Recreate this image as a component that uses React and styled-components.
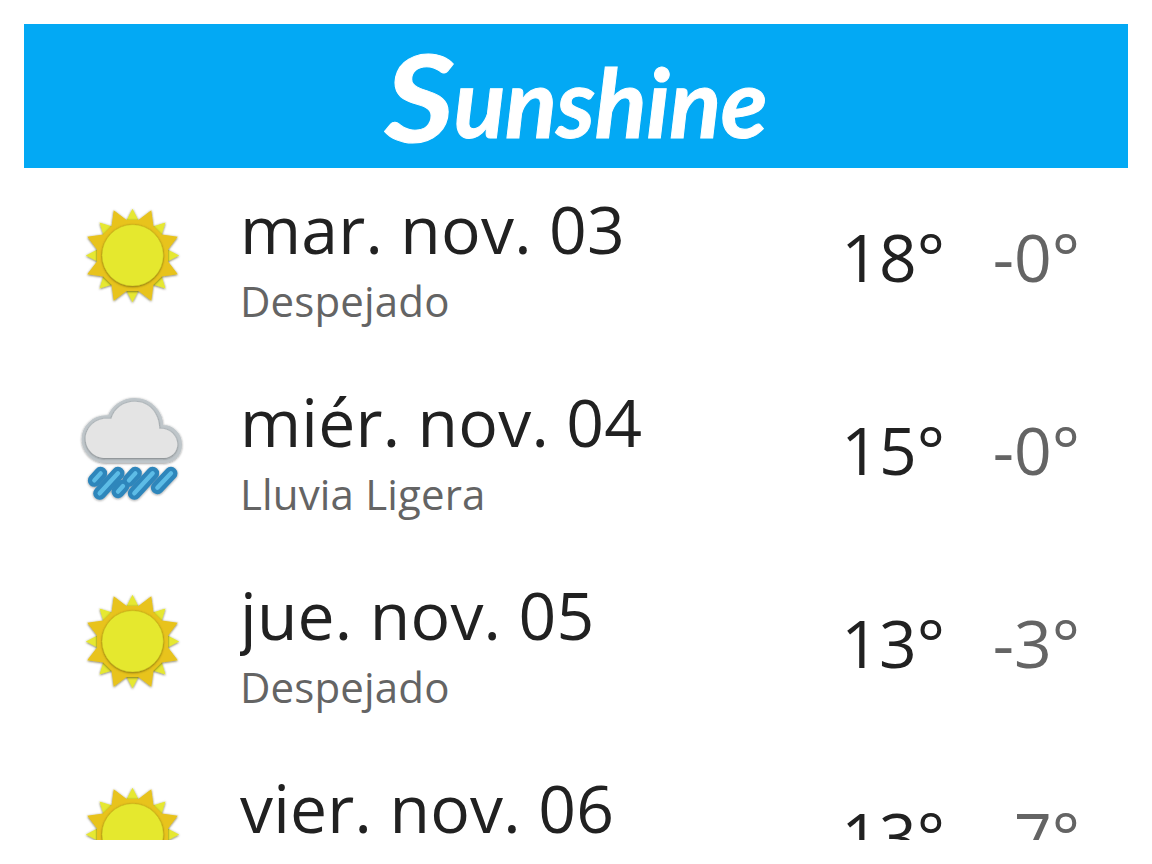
import React from 'react';
import styled, { createGlobalStyle } from 'styled-components';

const Global = createGlobalStyle`
  * { box-sizing: border-box; }
  body { margin: 0; background: #fff; }
`;

const Page = styled.div`
  height: 864px;
  padding: 24px;
  font-family: 'Open Sans', 'Noto Sans', sans-serif;
`;

const Screen = styled.main`
  display: flex;
  flex-direction: column;
  height: 816px;
  overflow: hidden;
`;

const Header = styled.header`
  flex: none;
  display: flex;
  justify-content: center;
  height: 144px;
  background: #03a9f4;
`;

const Brand = styled.h1`
  display: flex;
  align-items: baseline;
  margin: 0;
  padding: 8px 0 0 7px;
  color: #fff;
  font: italic 700 96px/120px Lato, sans-serif;
  letter-spacing: -0.5px;
  white-space: nowrap;
  -webkit-text-stroke: 1px #fff;
`;

const Initial = styled.span`
  font-size: 120px;
  line-height: 120px;
  transform: translateY(4px) scaleX(1.12);
  transform-origin: right;
`;

const List = styled.ul`
  flex: none;
  margin: 0;
  padding: 0;
  list-style: none;
`;

const Row = styled.li`
  display: grid;
  grid-template-columns: 216px 1fr 134px 135px;
  height: 193px;
  padding-right: 48px;
`;

const IconCell = styled.div`
  padding: 28px 0 0 48px;
  svg { display: block; }
`;

const Info = styled.div`
  display: flex;
  flex-direction: column;
  overflow: hidden;
`;

const DayName = styled.div`
  height: 103px;
  color: #212121;
  font-size: 66px;
  line-height: 120px;
  letter-spacing: 0.22px;
  white-space: nowrap;
`;

const Summary = styled.div`
  color: #646464;
  font-size: 42px;
  line-height: 60px;
  letter-spacing: 0.15px;
`;

const Temp = styled.div`
  color: ${(p) => (p.$low ? '#646464' : '#212121')};
  font-size: 66px;
  line-height: 176px;
  text-align: right;
  white-space: nowrap;
`;

const point = (r, deg) => {
  const a = (deg * Math.PI) / 180;
  return `${(181.5 + r * Math.sin(a)).toFixed(1)},${(178.5 - r * Math.cos(a)).toFixed(1)}`;
};
const steps = [0, 45, 90, 135, 180, 225, 270, 315];
const rays = steps
  .flatMap((a) => [point(108, a - 9.5), point(108, a + 9.5), point(147, a + 22.5)])
  .join(' ');

function Sun() {
  return (
    <svg width="120" height="130" viewBox="0 0 360 390">
      <defs>
        <filter id="sunShadow" x="-20%" y="-20%" width="140%" height="140%">
          <feDropShadow dx="0" dy="2" stdDeviation="3" floodColor="#443a10" floodOpacity="0.75" />
        </filter>
      </defs>
      <g filter="url(#sunShadow)">
        {steps.map((a) => (
          <polygon key={a} fill="#e6e832" points={[point(104, a - 11), point(140, a), point(104, a + 11)].join(' ')} />
        ))}
      </g>
      <polygon points={rays} fill="#e8c31a" filter="url(#sunShadow)" />
      <circle cx="182" cy="178" r="92" fill="#e5e82e" filter="url(#sunShadow)" />
      <circle cx="182" cy="178" r="92" fill="none" stroke="#c3b41c" strokeWidth="1.2" />
    </svg>
  );
}

const drops = [
  [67, 283, 86, 262],
  [83, 322, 138, 262],
  [138, 317, 153, 300],
  [171, 283, 190, 262],
  [187, 322, 242, 262],
  [256, 305, 297, 262],
];
const cloud =
  'M102 93 H112 C122 63 152 41 188 41 C234 41 269 78 269 122 C301 120 325 146 325 175 C325 204 304 226 276 226 H102 C65 226 34 196 34 159 C34 122 65 93 102 93 Z';
const cloudFace =
  'M102 98 H118 C128 66 155 47 188 47 C230 47 261 80 262 128 C294 126 316 150 316 175 C316 198 298 216 276 216 H102 C69 216 41 192 41 158 C41 126 69 98 102 98 Z';

function Rain() {
  return (
    <svg width="120" height="130" viewBox="0 9 360 390">
      <defs>
        <filter id="rainShadow" filterUnits="userSpaceOnUse" x="0" y="0" width="360" height="400">
          <feDropShadow dx="0" dy="2" stdDeviation="2.5" floodColor="#222" floodOpacity="0.5" />
        </filter>
      </defs>
      <path d={cloud} fill="#bfc6ca" stroke="#bfc6ca" strokeWidth="10" filter="url(#rainShadow)" />
      <path d={cloudFace} fill="#e4e4e4" filter="url(#rainShadow)" />
      <g strokeLinecap="round" stroke="#2f86bb" strokeWidth="39" filter="url(#rainShadow)">
        {drops.map(([a, b, c, d]) => <line key={a} x1={a} y1={b} x2={c} y2={d} />)}
      </g>
      <g strokeLinecap="round" stroke="#5dbce6" strokeWidth="13">
        {drops.map(([a, b, c, d]) => <line key={a} x1={a} y1={b} x2={c} y2={d} />)}
      </g>
    </svg>
  );
}

const days = [
  { day: 'mar. nov. 03', text: 'Despejado', high: '18°', low: '-0°', Icon: Sun },
  { day: 'miér. nov. 04', text: 'Lluvia Ligera', high: '15°', low: '-0°', Icon: Rain },
  { day: 'jue. nov. 05', text: 'Despejado', high: '13°', low: '-3°', Icon: Sun },
  { day: 'vier. nov. 06', text: 'Despejado', high: '13°', low: '-7°', Icon: Sun },
];

export default function App() {
  return (
    <Page>
      <Global />
      <Screen>
        <Header><Brand><Initial>S</Initial>unshine</Brand></Header>
        <List>
          {days.map(({ day, text, high, low, Icon }) => (
            <Row key={day}>
              <IconCell><Icon /></IconCell>
              <Info>
                <DayName>{day}</DayName>
                <Summary>{text}</Summary>
              </Info>
              <Temp>{high}</Temp>
              <Temp $low>{low}</Temp>
            </Row>
          ))}
        </List>
      </Screen>
    </Page>
  );
}
